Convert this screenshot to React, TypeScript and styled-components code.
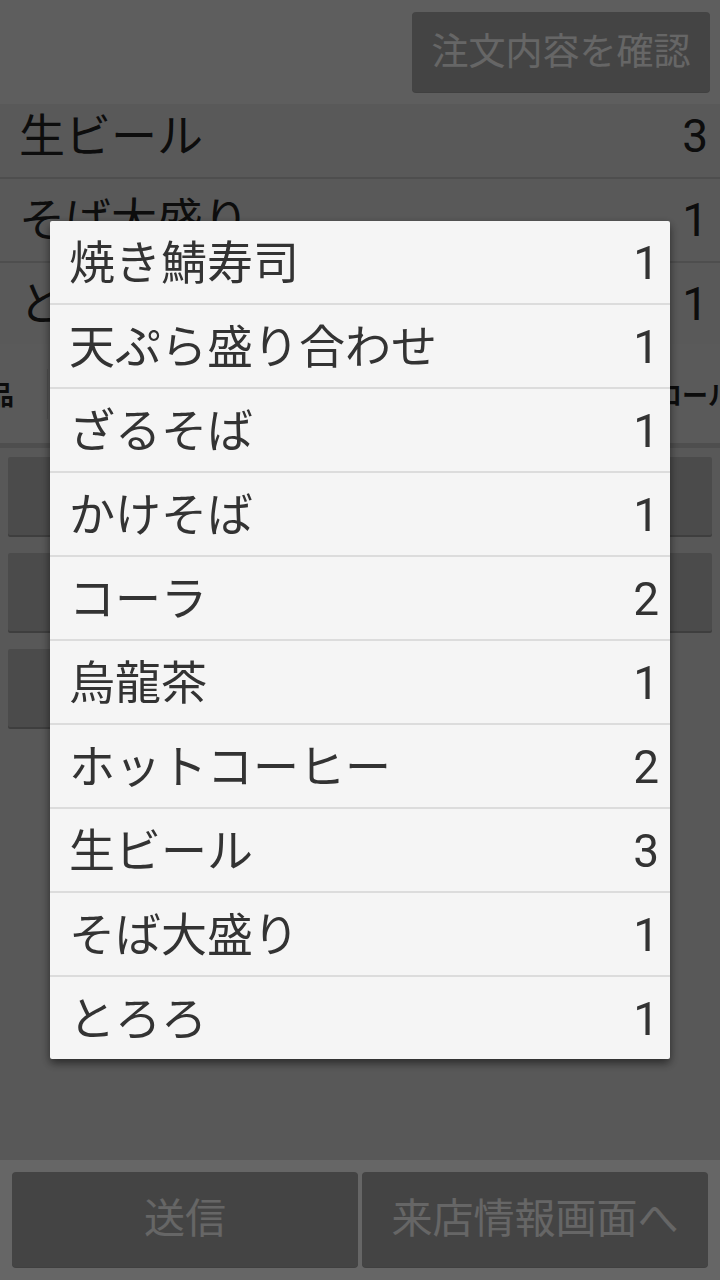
import React from "react";
import styled, { createGlobalStyle } from "styled-components";

const Global = createGlobalStyle`
  html, body { margin: 0; padding: 0; }
  body {
    font-family: Roboto, "Noto Sans CJK JP", "Noto Sans", sans-serif;
    background: #dcdcdc;
  }
  * { box-sizing: border-box; }
`;

const Screen = styled.div`
  width: 720px;
  height: 1280px;
  display: flex;
  flex-direction: column;
  background: #dcdcdc;
  overflow: hidden;
`;

const TopBar = styled.div`
  height: 104px;
  background: #ebebeb;
  display: flex;
  justify-content: flex-end;
  align-items: flex-start;
  padding: 12px 10px 0 0;
`;

const ActionButton = styled.div<{ $w: number; $h: number; $size: number }>`
  width: ${(p) => p.$w}px;
  height: ${(p) => p.$h}px;
  background: #aaaaaa;
  border-radius: 4px;
  color: #ffffff;
  font-size: ${(p) => p.$size}px;
  display: flex;
  align-items: center;
  justify-content: center;
  line-height: 1;
  box-shadow: 0 1px 0 #a0a0a0;
`;

const OrderList = styled.div`
  height: 240px;
  overflow: hidden;
  background: #dedede;
`;

const OrderInner = styled.div`
  margin-top: -9px;
`;

const OrderRow = styled.div`
  height: 84px;
  padding: 0 12px 0 19px;
  border-bottom: 2px solid #c4c4c4;
  display: flex;
  align-items: center;
  justify-content: space-between;
  font-size: 46px;
  color: #222222;
  line-height: 1;
`;

const HeaderRow = styled.div`
  height: 104px;
  background: #e0e0e0;
  border-bottom: 5px solid #c2c2c2;
  display: flex;
  align-items: center;
  font-size: 26px;
  font-weight: 700;
  color: #1e1e1e;
  white-space: nowrap;
`;

const HeaderLeft = styled.div`
  width: 48px;
  height: 50px;
  border-right: 1px solid #c8c8c8;
  display: flex;
  align-items: center;
  justify-content: flex-end;
  padding-right: 33px;
`;

const HeaderMid = styled.div`
  flex: 1;
`;

const HeaderRight = styled.div`
  width: 142px;
  display: flex;
  align-items: center;
  overflow: visible;
`;

const CardGrid = styled.div`
  flex: 1;
  display: grid;
  grid-template-columns: 1fr 1fr;
  grid-auto-rows: 78px;
  column-gap: 8px;
  row-gap: 18px;
  align-content: start;
  padding: 9px 8px 0 8px;
`;

const Card = styled.div`
  background: #bcbcbc;
  border-radius: 2px;
  box-shadow: 0 2px 0 #9c9c9c;
`;

const BottomBar = styled.div`
  height: 120px;
  background: #ffffff;
  display: flex;
  gap: 4px;
  padding: 12px 12px 13px 12px;
`;

const Scrim = styled.div`
  position: fixed;
  inset: 0;
  background: rgba(0, 0, 0, 0.6);
`;

const Dialog = styled.div`
  position: fixed;
  left: 50px;
  top: 221px;
  width: 620px;
  background: #f5f5f5;
  border-radius: 2px;
  box-shadow: 0 4px 10px rgba(0, 0, 0, 0.55);
  overflow: hidden;
`;

const DialogRow = styled.div<{ $last?: boolean }>`
  height: ${(p) => (p.$last ? 82 : 84)}px;
  border-bottom: ${(p) => (p.$last ? "none" : "2px solid #dcdcdc")};
  display: flex;
  align-items: center;
  justify-content: space-between;
  padding: 2px 11px 0 19px;
  font-size: 46px;
  color: #333333;
  line-height: 1;
  white-space: nowrap;
`;

const orders = [
  { name: "生ビール", qty: 3 },
  { name: "そば大盛り", qty: 1 },
  { name: "とろろ", qty: 1 },
];

const dialogItems = [
  { name: "焼き鯖寿司", qty: 1 },
  { name: "天ぷら盛り合わせ", qty: 1 },
  { name: "ざるそば", qty: 1 },
  { name: "かけそば", qty: 1 },
  { name: "コーラ", qty: 2 },
  { name: "烏龍茶", qty: 1 },
  { name: "ホットコーヒー", qty: 2 },
  { name: "生ビール", qty: 3 },
  { name: "そば大盛り", qty: 1 },
  { name: "とろろ", qty: 1 },
];

export default function App() {
  return (
    <>
      <Global />
      <Screen>
        <TopBar>
          <ActionButton $w={298} $h={80} $size={37}>
            注文内容を確認
          </ActionButton>
        </TopBar>
        <OrderList>
          <OrderInner>
            {orders.map((o) => (
              <OrderRow key={o.name}>
                <span>{o.name}</span>
                <span>{o.qty}</span>
              </OrderRow>
            ))}
          </OrderInner>
        </OrderList>
        <HeaderRow>
          <HeaderLeft>商品</HeaderLeft>
          <HeaderMid />
          <HeaderRight>コントロール</HeaderRight>
        </HeaderRow>
        <CardGrid>
          <Card />
          <Card />
          <Card />
          <Card />
          <Card />
        </CardGrid>
        <BottomBar>
          <ActionButton $w={346} $h={95} $size={41}>
            送信
          </ActionButton>
          <ActionButton $w={346} $h={95} $size={41}>
            来店情報画面へ
          </ActionButton>
        </BottomBar>
      </Screen>
      <Scrim />
      <Dialog>
        {dialogItems.map((it, i) => (
          <DialogRow key={i} $last={i === dialogItems.length - 1}>
            <span>{it.name}</span>
            <span>{it.qty}</span>
          </DialogRow>
        ))}
      </Dialog>
    </>
  );
}
